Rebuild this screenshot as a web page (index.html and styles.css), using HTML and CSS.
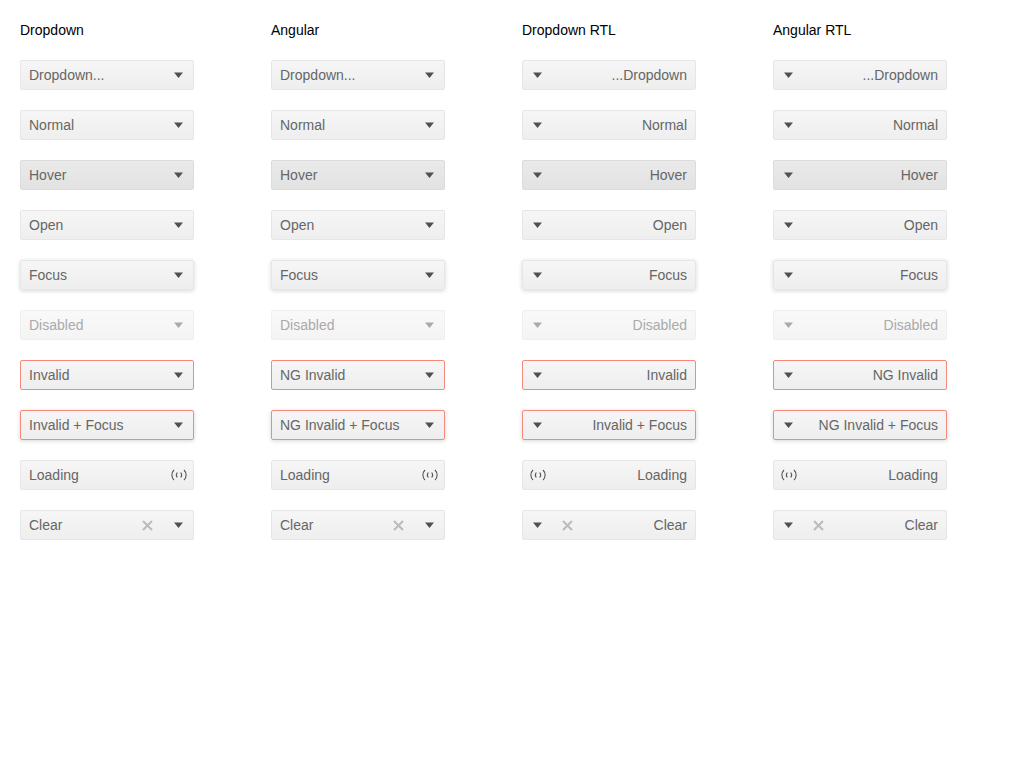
FILE: index.html
```html
<!DOCTYPE html>
<html>
<head>
<meta charset="utf-8">
<link rel="stylesheet" href="styles.css">
</head>
<body>
<svg width="0" height="0" class="defs">
  <defs>
    <symbol id="caret" viewBox="0 0 9 6"><path d="M0 0.5 H9 L4.5 6 Z"/></symbol>
    <symbol id="times" viewBox="0 0 11 11"><path d="M1 1 L10 10 M10 1 L1 10" stroke-width="2" stroke="currentColor" fill="none"/></symbol>
    <symbol id="spin" viewBox="0 0 18 12"><g fill="none" stroke="currentColor" stroke-width="1.1"><path d="M4 1 A7 7 0 0 0 4 11"/><path d="M14 1 A7 7 0 0 1 14 11"/><path d="M7.3 3.5 A4 4 0 0 0 7.3 8.5"/><path d="M10.7 3.5 A4 4 0 0 1 10.7 8.5"/></g></symbol>
  </defs>
</svg>
<div class="grid">
  <div class="col">
    <div class="head">Dropdown</div>
    <div class="dd"><span class="label ph">Dropdown...</span><svg class="caret"><use href="#caret"/></svg></div>
    <div class="dd"><span class="label">Normal</span><svg class="caret"><use href="#caret"/></svg></div>
    <div class="dd hover"><span class="label">Hover</span><svg class="caret"><use href="#caret"/></svg></div>
    <div class="dd"><span class="label">Open</span><svg class="caret"><use href="#caret"/></svg></div>
    <div class="dd focus"><span class="label">Focus</span><svg class="caret"><use href="#caret"/></svg></div>
    <div class="dd disabled"><span class="label">Disabled</span><svg class="caret"><use href="#caret"/></svg></div>
    <div class="dd invalid"><span class="label">Invalid</span><svg class="caret"><use href="#caret"/></svg></div>
    <div class="dd invalid focus"><span class="label">Invalid + Focus</span><svg class="caret"><use href="#caret"/></svg></div>
    <div class="dd"><span class="label">Loading</span><svg class="spin"><use href="#spin"/></svg></div>
    <div class="dd"><span class="label">Clear</span><svg class="clear"><use href="#times"/></svg><svg class="caret"><use href="#caret"/></svg></div>
  </div>
  <div class="col">
    <div class="head">Angular</div>
    <div class="dd"><span class="label ph">Dropdown...</span><svg class="caret"><use href="#caret"/></svg></div>
    <div class="dd"><span class="label">Normal</span><svg class="caret"><use href="#caret"/></svg></div>
    <div class="dd hover"><span class="label">Hover</span><svg class="caret"><use href="#caret"/></svg></div>
    <div class="dd"><span class="label">Open</span><svg class="caret"><use href="#caret"/></svg></div>
    <div class="dd focus"><span class="label">Focus</span><svg class="caret"><use href="#caret"/></svg></div>
    <div class="dd disabled"><span class="label">Disabled</span><svg class="caret"><use href="#caret"/></svg></div>
    <div class="dd invalid"><span class="label">NG Invalid</span><svg class="caret"><use href="#caret"/></svg></div>
    <div class="dd invalid focus"><span class="label">NG Invalid + Focus</span><svg class="caret"><use href="#caret"/></svg></div>
    <div class="dd"><span class="label">Loading</span><svg class="spin"><use href="#spin"/></svg></div>
    <div class="dd"><span class="label">Clear</span><svg class="clear"><use href="#times"/></svg><svg class="caret"><use href="#caret"/></svg></div>
  </div>
  <div class="col rtl">
    <div class="head">Dropdown RTL</div>
    <div class="dd"><span class="label ph">...Dropdown</span><svg class="caret"><use href="#caret"/></svg></div>
    <div class="dd"><span class="label">Normal</span><svg class="caret"><use href="#caret"/></svg></div>
    <div class="dd hover"><span class="label">Hover</span><svg class="caret"><use href="#caret"/></svg></div>
    <div class="dd"><span class="label">Open</span><svg class="caret"><use href="#caret"/></svg></div>
    <div class="dd focus"><span class="label">Focus</span><svg class="caret"><use href="#caret"/></svg></div>
    <div class="dd disabled"><span class="label">Disabled</span><svg class="caret"><use href="#caret"/></svg></div>
    <div class="dd invalid"><span class="label">Invalid</span><svg class="caret"><use href="#caret"/></svg></div>
    <div class="dd invalid focus"><span class="label">Invalid + Focus</span><svg class="caret"><use href="#caret"/></svg></div>
    <div class="dd"><span class="label">Loading</span><svg class="spin"><use href="#spin"/></svg></div>
    <div class="dd"><span class="label">Clear</span><svg class="clear"><use href="#times"/></svg><svg class="caret"><use href="#caret"/></svg></div>
  </div>
  <div class="col rtl">
    <div class="head">Angular RTL</div>
    <div class="dd"><span class="label ph">...Dropdown</span><svg class="caret"><use href="#caret"/></svg></div>
    <div class="dd"><span class="label">Normal</span><svg class="caret"><use href="#caret"/></svg></div>
    <div class="dd hover"><span class="label">Hover</span><svg class="caret"><use href="#caret"/></svg></div>
    <div class="dd"><span class="label">Open</span><svg class="caret"><use href="#caret"/></svg></div>
    <div class="dd focus"><span class="label">Focus</span><svg class="caret"><use href="#caret"/></svg></div>
    <div class="dd disabled"><span class="label">Disabled</span><svg class="caret"><use href="#caret"/></svg></div>
    <div class="dd invalid"><span class="label">NG Invalid</span><svg class="caret"><use href="#caret"/></svg></div>
    <div class="dd invalid focus"><span class="label">NG Invalid + Focus</span><svg class="caret"><use href="#caret"/></svg></div>
    <div class="dd"><span class="label">Loading</span><svg class="spin"><use href="#spin"/></svg></div>
    <div class="dd"><span class="label">Clear</span><svg class="clear"><use href="#times"/></svg><svg class="caret"><use href="#caret"/></svg></div>
  </div>
</div>
</body>
</html>
```

FILE: styles.css
```css
html, body {
  margin: 0;
  padding: 0;
  background: #fff;
}
body {
  font-family: "Liberation Sans", Arial, sans-serif;
  font-size: 14px;
  color: #000;
}
.defs {
  position: absolute;
  width: 0;
  height: 0;
}
.grid {
  display: grid;
  grid-template-columns: repeat(4, 174px);
  column-gap: 77px;
  padding: 20px;
}
.col {
  display: flex;
  flex-direction: column;
  gap: 20px;
}
.head {
  height: 20px;
  line-height: 20px;
}
.dd {
  box-sizing: border-box;
  height: 30px;
  display: flex;
  align-items: center;
  padding: 0 10px 0 8px;
  border: 1px solid #e6e6e6;
  border-radius: 2px;
  background: linear-gradient(#f6f6f6, #eeeeee);
  color: #666;
}
.rtl .dd {
  flex-direction: row-reverse;
  padding: 0 8px 0 10px;
}
.label {
  flex: 1;
  white-space: nowrap;
}
.rtl .label {
  text-align: right;
}
.caret {
  width: 9px;
  height: 6px;
  fill: #505050;
  flex: none;
}
.clear {
  width: 11px;
  height: 11px;
  color: #bbb;
  flex: none;
  margin-right: 21px;
}
.rtl .clear {
  margin-right: 0;
  margin-left: 20px;
}
.spin {
  width: 18px;
  height: 12px;
  color: #555;
  flex: none;
  margin-right: -5px;
}
.rtl .spin {
  margin-right: 0;
  margin-left: -4px;
}
.dd.hover {
  background: linear-gradient(#eaeaea, #e2e2e2);
  border-color: #dcdcdc;
}
.dd.focus {
  box-shadow: 0 1px 4px rgba(0, 0, 0, 0.16);
}
.dd.disabled {
  background: linear-gradient(#f9f9f9, #f4f4f4);
  border-color: #efefef;
  color: #aaa;
}
.dd.disabled .caret {
  fill: #aaa;
}
.dd.invalid {
  border-color: #f48a7c;
}
```
